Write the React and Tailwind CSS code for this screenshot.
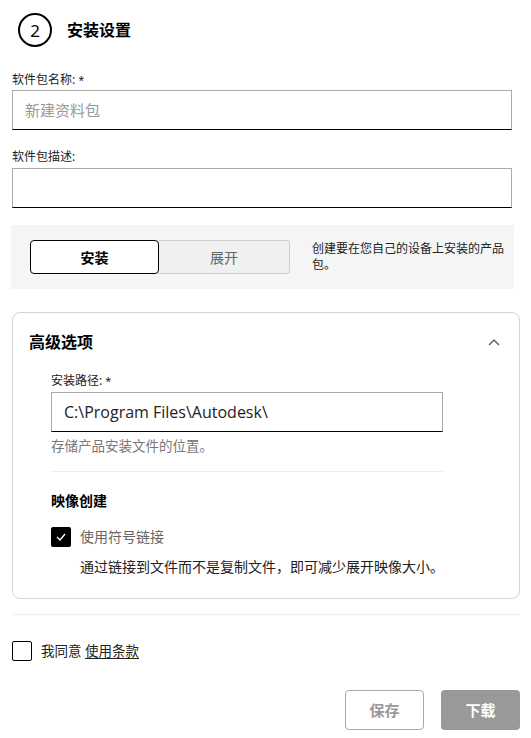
import React from "react";

const font = { fontFamily: '"Noto Sans", "Noto Sans CJK SC", sans-serif' };

export default function App() {
  return (
    <div
      className="w-[531px] h-[738px] bg-white pl-3 pr-[11px] text-black overflow-hidden"
      style={font}
    >
      {/* header */}
      <div className="flex items-center pt-[13px]">
        <div className="ml-[6px] w-[34px] h-[34px] rounded-full border-2 border-black flex items-center justify-center text-[17px] leading-none">
          2
        </div>
        <div className="ml-[15px] text-[16px] font-bold leading-6">安装设置</div>
      </div>

      {/* name */}
      <div className="mt-[25px] text-[12px] leading-4 text-[#222]">
        软件包名称: <span className="align-top text-[11px]">*</span>
      </div>
      <div className="mt-[2px] w-[500px] h-[40px] border border-[#aaa] border-b-black flex items-center pl-3 text-[15px] text-[#999]">
        新建资料包
      </div>

      {/* description */}
      <div className="mt-[19px] text-[12px] leading-4 text-[#222]">软件包描述:</div>
      <div className="mt-[3px] w-[500px] h-[40px] border border-[#aaa] border-b-black" />

      {/* mode panel */}
      <div className="mt-[17px] -ml-px w-[503px] h-[64px] bg-[#f5f5f5] flex items-center pl-[19px]">
        <div className="flex w-[260px] h-[34px]">
          <div className="w-[129px] h-full border border-black rounded-[4px] bg-white flex items-center justify-center text-[14px] font-bold">
            安装
          </div>
          <div className="flex-1 h-full border border-l-0 border-[#ccc] rounded-r-[4px] bg-[#f0f0f0] flex items-center justify-center text-[14px] text-[#666]">
            展开
          </div>
        </div>
        <div className="ml-[22px] w-[196px] text-[12px] leading-4 text-[#222]">
          创建要在您自己的设备上安装的产品包。
        </div>
      </div>

      {/* advanced card */}
      <div className="mt-[23px] w-[508px] border border-[#d4d4d4] rounded-lg pb-[21px]">
        <div className="flex items-center justify-between pl-4 pr-[19px] pt-[17px]">
          <div className="text-[16px] font-bold leading-6">高级选项</div>
          <svg width="12" height="8" viewBox="0 0 12 8" fill="none">
            <polyline points="1,7 6,2 11,7" stroke="#666" strokeWidth="1.5" />
          </svg>
        </div>
        <div className="pl-[38px]">
          <div className="mt-[19px] text-[12px] leading-4 text-[#222]">
            安装路径: <span className="align-top text-[11px]">*</span>
          </div>
          <div
            className="mt-[3px] w-[392px] h-[40px] border border-[#aaa] border-b-black flex items-center pl-3 text-[16px] text-[#222]"
            style={{ fontFamily: '"Open Sans", "Noto Sans", sans-serif' }}
          >
            C:\Program Files\Autodesk\
          </div>
          <div className="mt-[5px] text-[13.5px] leading-[18px] text-[#777]">存储产品安装文件的位置。</div>
          <div className="mt-[16px] w-[392px] h-px bg-[#eee]" />
          <div className="mt-[19px] text-[14px] font-bold leading-5">映像创建</div>
          <div className="mt-[16px] flex items-center">
            <div className="w-5 h-5 rounded-[2px] bg-black flex items-center justify-center">
              <svg width="10" height="8" viewBox="0 0 10 8" fill="none">
                <polyline points="1,4 4,7 9,1" stroke="white" strokeWidth="1.4" />
              </svg>
            </div>
            <div className="ml-[9px] text-[14px] leading-5 text-[#666]">使用符号链接</div>
          </div>
          <div className="mt-[10px] ml-[29px] text-[14px] leading-5 text-[#222]">
            通过链接到文件而不是复制文件，即可减少展开映像大小。
          </div>
        </div>
      </div>

      {/* divider */}
      <div className="mt-[15px] w-[508px] h-px bg-[#eee]" />

      {/* agree */}
      <div className="mt-[26px] flex items-center">
        <div className="w-5 h-5 rounded-[2px] border border-black bg-white" />
        <div className="ml-[9px] text-[13.5px] leading-5 text-[#222]">
          我同意 <span className="underline underline-offset-2">使用条款</span>
        </div>
      </div>

      {/* buttons */}
      <div className="mt-[29px] w-[508px] flex justify-end gap-[17px]">
        <div className="w-[79px] h-[40px] border border-[#aaa] rounded-[4px] flex items-center justify-center text-[15px] font-bold text-[#999]">
          保存
        </div>
        <div className="w-[79px] h-[40px] rounded-[4px] bg-[#999] flex items-center justify-center text-[15px] font-bold text-white">
          下载
        </div>
      </div>
    </div>
  );
}
